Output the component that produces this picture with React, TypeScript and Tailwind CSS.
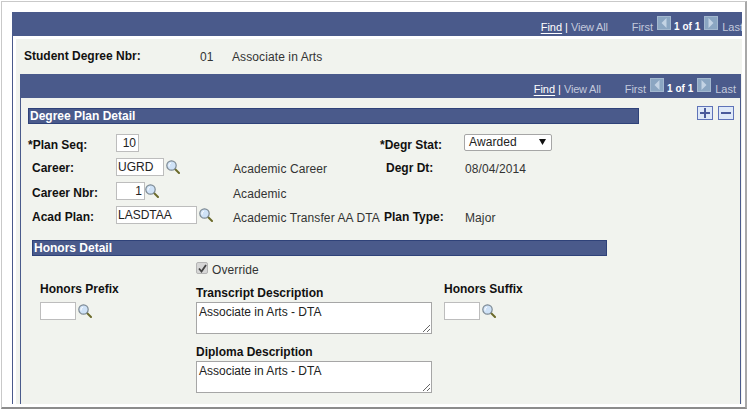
import React from 'react';

const font = { fontFamily: '"Liberation Sans", Arial, sans-serif' };

const Lookup: React.FC = () => (
  <svg width="14" height="14" viewBox="0 0 14 14" className="shrink-0">
    <line x1="9" y1="9" x2="13" y2="13" stroke="#6b6a2a" strokeWidth="2" strokeLinecap="round" />
    <circle cx="5.5" cy="5.5" r="4.7" fill="#cfe2f7" stroke="#7d8a94" strokeWidth="1.2" />
    <path d="M3 6.5a3 3 0 0 1 2-3.5" fill="none" stroke="#ffffff" strokeWidth="1" />
  </svg>
);

const NavArrow: React.FC<{ dir: 'left' | 'right' }> = ({ dir }) => (
  <span className="w-[14px] h-[14px] bg-[#8ba6c2] flex items-center justify-center border border-[#a3b8cf]">
    <svg width="6" height="10" viewBox="0 0 6 10">
      <path d={dir === 'left' ? 'M5.5 0v10L0.5 5z' : 'M0.5 0v10L5.5 5z'} fill="#c3d3e4" />
    </svg>
  </span>
);

const Pager: React.FC = () => (
  <div className="flex shrink-0 items-center whitespace-nowrap text-[11px] leading-none text-[#c3c9dc]">
    <span className="text-white underline underline-offset-2">Find</span>
    <span className="text-white mx-[3px]">|</span>
    <span className="tracking-[-0.2px]">View All</span>
    <span className="ml-6">First</span>
    <span className="ml-[4px] -mt-[8px]"><NavArrow dir="left" /></span>
    <span className="ml-[3px] font-bold text-[10px] text-white">1 of 1</span>
    <span className="ml-[4px] -mt-[8px]"><NavArrow dir="right" /></span>
    <span className="ml-[4px]">Last</span>
  </div>
);

const Field: React.FC<{ value?: string; width: string; right?: boolean }> = ({ value = '', width, right }) => (
  <input
    readOnly
    value={value}
    className={`${width} h-[18px] bg-white border border-[#bdbdbd] px-[1px] pb-[1px] text-[12px] text-[#222] outline-none ${right ? 'text-right pr-[2px]' : ''}`}
  />
);

const Label: React.FC<{ children: React.ReactNode; className?: string }> = ({ children, className = '' }) => (
  <span className={`font-bold text-[12px] leading-[14px] text-[#111] ${className}`}>{children}</span>
);

const Value: React.FC<{ children: React.ReactNode; className?: string }> = ({ children, className = '' }) => (
  <span className={`text-[12px] leading-[14px] tracking-[0.1px] text-[#333] ${className}`}>{children}</span>
);

const SectionBar: React.FC<{ title: string; className: string }> = ({ title, className }) => (
  <div className={`h-[16px] bg-[#4a5a8b] border border-[#2f4279] text-white font-bold text-[12px] leading-[14px] pl-[1px] ${className}`}>
    {title}
  </div>
);

const Description: React.FC<{ value: string }> = ({ value }) => (
  <textarea
    readOnly
    value={value}
    className="block w-[236px] h-[32px] bg-white border border-[#a6a6a6] px-[2px] pt-[2px] text-[12px] leading-[14px] text-[#222] outline-none"
  />
);

export default function App() {
  return (
    <div className="w-[749px] h-[412px] bg-white overflow-hidden pt-[1px] pl-[1px]" style={font}>
      <div className="w-[746px] h-[408px] bg-white border-l border-t border-[#c9c9c9] border-r-2 border-b-2 border-r-[#a8a8a8] border-b-[#8c8c8c] pl-[10px] pt-[10px] overflow-hidden">
        {/* Outer scroll area */}
        <div className="w-[730px] border-l border-[#4a5a8b]">
          <div className="h-[24px] bg-[#4a5a8b] flex items-center justify-end pt-[6px] overflow-hidden">
            <div className="-mr-[1px]"><Pager /></div>
          </div>
          <div className="h-[3px] bg-white" />
          <div className="h-[365px] ml-[3px] bg-[#f1f3ee] overflow-hidden">
            <div className="h-[35px] flex items-center pl-[8px] pb-[1px]">
              <Label className="w-[176px]">Student Degree Nbr:</Label>
              <Value className="w-[32px] pt-[2px]">01</Value>
              <Value className="pt-[2px]">Associate in Arts</Value>
            </div>
            {/* Inner scroll area */}
            <div className="w-[721px] ml-[4px] h-[330px] border-x border-[#4a5a8b]">
              <div className="h-[24px] -mx-px bg-[#4a5a8b] flex items-center justify-end pt-[6px] pr-[5px]">
                <Pager />
              </div>

              <div className="relative pl-[7px] pt-[10px]">
                <div className="absolute right-[6px] top-[8px] flex gap-[5px]">
                  <span className="w-[16px] h-[14px] bg-[#dfe9f8] border border-[#5f73b8] flex items-center justify-center">
                    <svg width="10" height="10" viewBox="0 0 10 10"><path d="M4 0h2v4h4v2H6v4H4V6H0V4h4z" fill="#4a5a9b" /></svg>
                  </span>
                  <span className="w-[16px] h-[14px] bg-[#dfe9f8] border border-[#5f73b8] flex items-center justify-center">
                    <svg width="10" height="10" viewBox="0 0 10 10"><path d="M0 4h10v2H0z" fill="#4a5a9b" /></svg>
                  </span>
                </div>

                <SectionBar title="Degree Plan Detail" className="w-[611px]" />

                <div className="mt-[10px] flex flex-col gap-[6px]">
                  <div className="h-[18px] flex items-center">
                    <Label className="w-[88px] pt-[4px]">*Plan Seq:</Label>
                    <Field value="10" width="w-[23px]" right />
                    <Label className="ml-[241px] w-[84px] pt-[4px]">*Degr Stat:</Label>
                    <div className="w-[88px] h-[17px] self-start bg-white border border-[#a6a6a6] rounded-[2px] flex items-center justify-between pl-[4px] pr-[5px] pb-[1px] text-[12px] tracking-[0.1px] text-[#222]">
                      Awarded
                      <svg width="7" height="6" viewBox="0 0 7 6"><path d="M0 0h7L3.5 6z" fill="#111" /></svg>
                    </div>
                  </div>
                  <div className="h-[18px] flex items-center pl-[4px]">
                    <Label className="w-[84px] pt-[2px]">Career:</Label>
                    <Field value="UGRD" width="w-[48px]" />
                    <span className="ml-[2px]"><Lookup /></span>
                    <Value className="ml-[53px] w-[153px] pt-[4px]">Academic Career</Value>
                    <Label className="w-[79px] pt-[2px]">Degr Dt:</Label>
                    <Value className="pt-[4px]">08/04/2014</Value>
                  </div>
                  <div className="h-[18px] flex items-center pl-[4px]">
                    <Label className="w-[84px] pt-[3px]">Career Nbr:</Label>
                    <Field value="1" width="w-[29px]" right />
                    <Lookup />
                    <Value className="ml-[74px] pt-[5px]">Academic</Value>
                  </div>
                  <div className="h-[18px] flex items-center pl-[4px]">
                    <Label className="w-[84px] pt-[3px]">Acad Plan:</Label>
                    <Field value="LASDTAA" width="w-[81px]" />
                    <span className="ml-[2px]"><Lookup /></span>
                    <Value className="ml-[20px] w-[151px] pt-[6px] whitespace-nowrap">Academic Transfer AA DTA</Value>
                    <Label className="w-[81px] pt-[3px]">Plan Type:</Label>
                    <Value className="pt-[6px]">Major</Value>
                  </div>
                </div>

                <SectionBar title="Honors Detail" className="w-[575px] ml-[4px] mt-[16px]" />

                <div className="flex mt-[6px] pl-[12px]">
                  <div className="w-[156px] pt-[20px]">
                    <Label className="block">Honors Prefix</Label>
                    <div className="flex items-center gap-[2px] mt-[6px]">
                      <Field width="w-[36px]" />
                      <Lookup />
                    </div>
                  </div>
                  <div className="w-[248px]">
                    <div className="flex items-center h-[12px] gap-[4px]">
                      <span className="w-[12px] h-[12px] bg-[#d6d6d6] border border-[#b5b5b5] rounded-[2px] flex items-center justify-center">
                        <svg width="9" height="9" viewBox="0 0 9 9"><path d="M1 4.5l2.5 3L8 1" fill="none" stroke="#444" strokeWidth="1.8" /></svg>
                      </span>
                      <Value className="text-[#222] pt-[3px]">Override</Value>
                    </div>
                    <Label className="block mt-[12px] mb-[2px]">Transcript Description</Label>
                    <Description value="Associate in Arts - DTA" />
                    <Label className="block mt-[11px] mb-[2px]">Diploma Description</Label>
                    <Description value="Associate in Arts - DTA" />
                  </div>
                  <div className="pt-[20px]">
                    <Label className="block">Honors Suffix</Label>
                    <div className="flex items-center gap-[2px] mt-[6px]">
                      <Field width="w-[36px]" />
                      <Lookup />
                    </div>
                  </div>
                </div>
              </div>
            </div>
          </div>
        </div>
      </div>
    </div>
  );
}
